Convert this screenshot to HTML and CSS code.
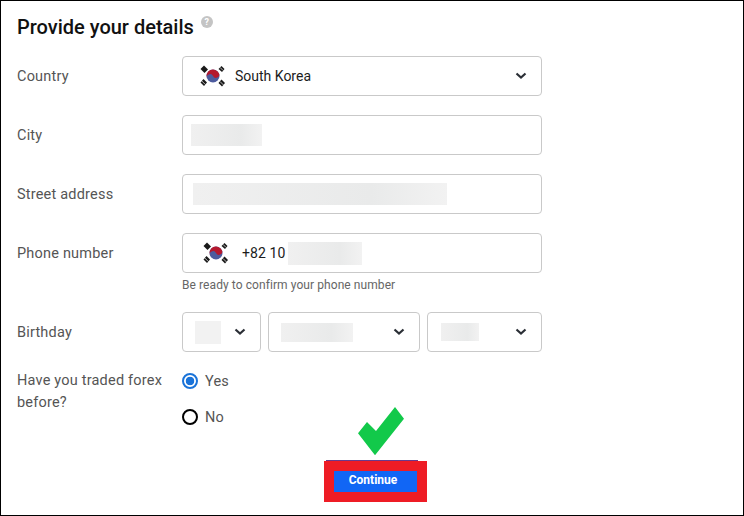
FILE: index.html
```html
<!DOCTYPE html>
<html lang="en">
<head>
<meta charset="utf-8">
<title>Provide your details</title>
<link rel="stylesheet" href="styles.css">
</head>
<body>
<svg class="defs" width="0" height="0" aria-hidden="true">
  <defs>
    <g id="kr-flag">
      <circle cx="15" cy="12" r="6.500" fill="#4d5b9e"/>
      <path transform="rotate(-25 15 12)" d="M8.500 12a6.500 6.500 0 0 1 13 0a3.250 3.250 0 0 1-6.500 0a3.250 3.250 0 0 0-6.500 0z" fill="#b5182e"/>
      <g fill="#1a1a1a">
        <path d="M6 1.500L10 5.500L6.500 9L2.500 5z"/>
        <path d="M23.500 2L26.500 5L24 8L20.500 5z"/>
        <path d="M5.500 15L9 18.500L6 22L2.500 18.500z"/>
        <path d="M23.500 15.500L27 19L24 22.500L20.500 19z"/>
      </g>
      <g fill="none" stroke="#fff" stroke-width="0.700">
        <path d="M22 3.400L25 6.400"/>
        <path d="M3.800 17L7.200 20.400"/>
        <path d="M22 17.500L25.500 21"/>
      </g>
    </g>
    <path id="chev" d="M1.500 1.500L6 5.600L10.500 1.500" fill="none" stroke="#2b2f36" stroke-width="2.200"/>
  </defs>
</svg>
<main class="frame">
  <h1 class="title">Provide your details <span class="help">?</span></h1>

  <div class="row">
    <label class="label">Country</label>
    <div class="field select">
      <svg class="flag" width="30" height="24" viewBox="0 0 30 24"><use href="#kr-flag"/></svg>
      <span class="value">South Korea</span>
      <svg class="chevron" width="12" height="8" viewBox="0 0 12 8"><use href="#chev"/></svg>
    </div>
  </div>

  <div class="row">
    <label class="label">City</label>
    <div class="field"><span class="blur blur-city"></span></div>
  </div>

  <div class="row">
    <label class="label">Street address</label>
    <div class="field"><span class="blur blur-street"></span></div>
  </div>

  <div class="row row-phone">
    <label class="label">Phone number</label>
    <div class="phone-col">
      <div class="field phone">
        <svg class="flag" width="30" height="24" viewBox="0 0 30 24"><use href="#kr-flag"/></svg>
        <span class="value">+82 10</span>
        <span class="blur blur-phone"></span>
      </div>
      <p class="hint">Be ready to confirm your phone number</p>
    </div>
  </div>

  <div class="row row-birthday">
    <label class="label">Birthday</label>
    <div class="dates">
      <div class="field select day">
        <span class="blur blur-day"></span>
        <svg class="chevron" width="12" height="8" viewBox="0 0 12 8"><use href="#chev"/></svg>
      </div>
      <div class="field select month">
        <span class="blur blur-month"></span>
        <svg class="chevron" width="12" height="8" viewBox="0 0 12 8"><use href="#chev"/></svg>
      </div>
      <div class="field select year">
        <span class="blur blur-year"></span>
        <svg class="chevron" width="12" height="8" viewBox="0 0 12 8"><use href="#chev"/></svg>
      </div>
    </div>
  </div>

  <div class="row row-radio">
    <label class="label label-wrap">Have you traded forex before?</label>
    <div class="radios">
      <div class="radio-item"><span class="radio checked"></span><span class="radio-text">Yes</span></div>
      <div class="radio-item"><span class="radio"></span><span class="radio-text">No</span></div>
    </div>
  </div>

  <div class="actions">
    <div class="highlight"><button class="continue" type="button">Continue</button></div>
  </div>

  <svg class="tick" width="48" height="50" viewBox="0 0 48 50"><path d="M37 0L46 11.700L17 48.300L0 26.300L9 15L18 24z" fill="#12c94a"/></svg>
</main>
</body>
</html>
```
FILE: styles.css
```css
* { box-sizing: border-box; }
html, body { margin: 0; padding: 0; background: #fff; }
.defs { position: absolute; }
.frame {
  position: relative;
  width: 744px;
  height: 516px;
  border: 1px solid #000;
  padding: 14px 0 0 16px;
  font-family: Roboto, "Liberation Sans", sans-serif;
  color: #111;
  overflow: hidden;
}
.title {
  margin: 0 0 17px;
  height: 24px;
  font-size: 20px;
  line-height: 24px;
  font-weight: 500;
  color: #111;
  display: flex;
  align-items: flex-start;
  gap: 3px;
}
.help {
  width: 12px;
  height: 12px;
  margin: 1px 0 0 4px;
  border-radius: 50%;
  background: #c4c4c4;
  color: #fff;
  font-size: 9px;
  line-height: 12px;
  font-weight: 700;
  text-align: center;
}
.row { display: flex; margin-bottom: 19px; }
.label {
  width: 165px;
  height: 40px;
  flex: none;
  font-size: 14.500px;
  line-height: 42px;
  color: #555;
  letter-spacing: 0.2px;
}
.field {
  width: 360px;
  height: 40px;
  border: 1px solid #c9c9c9;
  border-radius: 4px;
  background: #fff;
  display: flex;
  align-items: center;
  position: relative;
}
.select { padding-right: 14px; }
.flag { flex: none; margin-left: 15px; }
.value { font-size: 14px; color: #1c1c1c; margin-left: 7px; }
.chevron { flex: none; margin-left: auto; }
.phone .flag { margin-left: 18px; }
.phone .value { margin-left: 11px; letter-spacing: 0.1px; }
.blur {
  display: block;
  flex: none;
  background: linear-gradient(90deg, #f0f0f0, #e9eaea 70%, #f2f2f2);
}
.blur-city { width: 71px; height: 22px; margin-left: 8px; }
.blur-street { width: 254px; height: 22px; margin-left: 10px; }
.blur-phone { width: 74px; height: 23px; margin-left: 2px; }
.blur-day { width: 26px; height: 23px; margin-left: 12px; background: #f2f2f2; }
.blur-month { width: 72px; height: 19px; margin-left: 12px; }
.blur-year { width: 38px; height: 18px; margin-left: 13px; }
.phone-col { display: flex; flex-direction: column; }
.hint {
  margin: 5px 0 0;
  font-size: 12px;
  line-height: 14px;
  letter-spacing: 0.08px;
  color: #666;
}
.row-phone { margin-bottom: 20px; }
.dates { display: flex; gap: 7px; }
.day { width: 79px; }
.month { width: 152px; }
.year { width: 115px; }
.row-birthday { margin-bottom: 10px; }
.row-radio { margin-bottom: 0; }
.label-wrap {
  height: auto;
  line-height: 22px;
  padding-top: 8px;
}
.radios { display: flex; flex-direction: column; gap: 16px; padding-top: 9px; }
.radio-item { display: flex; align-items: center; gap: 7px; height: 20px; }
.radio {
  width: 16px;
  height: 16px;
  border-radius: 50%;
  border: 2px solid #000;
  background: #fff;
  flex: none;
}
.radio.checked {
  border-color: #1a73d9;
  background: radial-gradient(circle, #1a73d9 0 4px, #fff 4.600px);
}
.radio-text { font-size: 14.500px; color: #555; letter-spacing: 0.2px; }
.actions { display: flex; justify-content: flex-start; margin: 34px 0 0 307px; }
.highlight {
  width: 103px;
  height: 41px;
  background: #ee1c25;
  padding: 10px;
  position: relative;
}
.highlight::before {
  content: "";
  position: absolute;
  left: 2px;
  top: -1px;
  width: 92px;
  height: 1px;
  background: #6a3a8c;
}
.continue {
  display: block;
  width: 83px;
  height: 21px;
  border: 0;
  padding: 0 5px 3px 0;
  background: #1166f5;
  color: #fff;
  font-family: Roboto, "Liberation Sans", sans-serif;
  font-size: 12px;
  font-weight: 700;
  line-height: 18px;
}
.tick { position: absolute; left: 357px; top: 406px; }
```
